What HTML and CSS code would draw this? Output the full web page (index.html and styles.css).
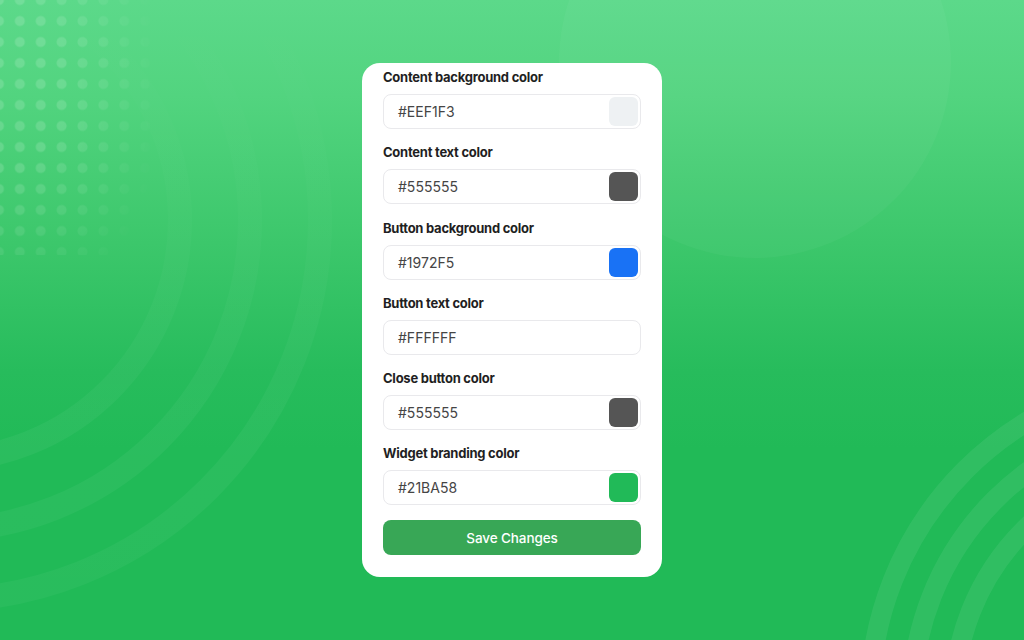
FILE: index.html
```html
<!DOCTYPE html>
<html lang="en">
<head>
<meta charset="utf-8">
<title>Widget colors</title>
<link rel="stylesheet" href="styles.css">
</head>
<body>
<div class="backdrop">
  <div class="dots"></div>
  <svg class="shapes" width="1024" height="640" viewBox="0 0 1024 640" aria-hidden="true">
    <defs>
      <linearGradient id="fadeLeft" x1="0" y1="0" x2="0" y2="640" gradientUnits="userSpaceOnUse">
        <stop offset="0" stop-color="#ffffff" stop-opacity="0"/>
        <stop offset="0.35" stop-color="#ffffff" stop-opacity="0.018"/>
        <stop offset="0.7" stop-color="#ffffff" stop-opacity="0.045"/>
        <stop offset="1" stop-color="#ffffff" stop-opacity="0.035"/>
      </linearGradient>
    </defs>
    <circle cx="755" cy="62" r="196" fill="#ffffff" fill-opacity="0.035"/>
    <g fill="none" stroke="url(#fadeLeft)" stroke-width="24">
      <circle cx="-60" cy="220" r="240"/>
      <circle cx="-60" cy="220" r="310"/>
      <circle cx="-60" cy="220" r="380"/>
    </g>
    <g fill="none" stroke="#ffffff" stroke-opacity="0.07" stroke-width="20">
      <circle cx="1195" cy="700" r="325"/>
      <circle cx="1195" cy="700" r="283"/>
      <circle cx="1195" cy="700" r="241"/>
    </g>
  </svg>
</div>
<main class="stage">
  <section class="card">
    <div class="field">
      <label class="label">Content background color</label>
      <div class="input"><span class="value">#EEF1F3</span><span class="swatch sw-eef1f3"></span></div>
    </div>
    <div class="field">
      <label class="label">Content text color</label>
      <div class="input"><span class="value">#555555</span><span class="swatch sw-555"></span></div>
    </div>
    <div class="field">
      <label class="label">Button background color</label>
      <div class="input"><span class="value">#1972F5</span><span class="swatch sw-1972f5"></span></div>
    </div>
    <div class="field">
      <label class="label">Button text color</label>
      <div class="input"><span class="value">#FFFFFF</span><span class="swatch sw-fff"></span></div>
    </div>
    <div class="field">
      <label class="label">Close button color</label>
      <div class="input"><span class="value">#555555</span><span class="swatch sw-555"></span></div>
    </div>
    <div class="field">
      <label class="label">Widget branding color</label>
      <div class="input"><span class="value">#21BA58</span><span class="swatch sw-21ba58"></span></div>
    </div>
    <button class="save">Save Changes</button>
  </section>
</main>
</body>
</html>
```
FILE: styles.css
```css
html, body {
  margin: 0;
  padding: 0;
}
body {
  width: 1024px;
  height: 640px;
  overflow: hidden;
  position: relative;
  font-family: Inter, "Noto Sans", "Liberation Sans", sans-serif;
  background: linear-gradient(180deg, #5cd98a 0%, #52d47f 15%, #3cc76b 38%, #27bc5c 58%, #21ba57 70%, #21ba57 100%);
}
.backdrop {
  position: absolute;
  inset: 0;
  z-index: 0;
}
.shapes {
  position: absolute;
  left: 0;
  top: 0;
}
.dots {
  position: absolute;
  left: 0;
  top: 0;
  width: 170px;
  height: 255px;
  background-image: radial-gradient(circle, rgba(255,255,255,0.15) 0, rgba(255,255,255,0.15) 4.5px, rgba(255,255,255,0) 5.5px);
  background-size: 20.9px 21px;
  background-position: -11.5px -10.5px;
  -webkit-mask-image: radial-gradient(ellipse 165px 250px at 0 35%, #000 35%, rgba(0,0,0,0) 100%);
  mask-image: radial-gradient(ellipse 165px 250px at 0 35%, #000 35%, rgba(0,0,0,0) 100%);
}
.stage {
  position: relative;
  z-index: 1;
  display: flex;
  justify-content: center;
  padding-top: 63px;
}
.card {
  width: 300px;
  box-sizing: border-box;
  background: #ffffff;
  border-radius: 18px;
  padding: 5px 21px 21.5px;
  display: flex;
  flex-direction: column;
  gap: 14.3px;
}
.field {
  display: flex;
  flex-direction: column;
}
.label {
  font-size: 13px;
  line-height: 18px;
  font-weight: 700;
  color: #1f1f23;
  letter-spacing: -0.25px;
  margin-bottom: 8px;
}
.input {
  box-sizing: border-box;
  height: 35px;
  border: 1px solid #e9e9ec;
  border-radius: 8px;
  display: flex;
  align-items: center;
  justify-content: space-between;
  padding: 0 2px 0 14px;
  background: #fff;
}
.value {
  font-size: 14px;
  color: #454545;
}
.swatch {
  width: 29px;
  height: 29px;
  border-radius: 6px;
}
.sw-eef1f3 { background: #eef1f3; }
.sw-555 { background: #555555; }
.sw-1972f5 { background: #1972f5; }
.sw-fff { background: #ffffff; }
.sw-21ba58 { background: #21ba58; }
.save {
  height: 35px;
  margin-top: 0.5px;
  border: none;
  border-radius: 8px;
  background: #38a756;
  color: #ffffff;
  font-family: Inter, "Noto Sans", "Liberation Sans", sans-serif;
  font-size: 13.5px;
  font-weight: 500;
  letter-spacing: -0.1px;
  cursor: pointer;
}
```
